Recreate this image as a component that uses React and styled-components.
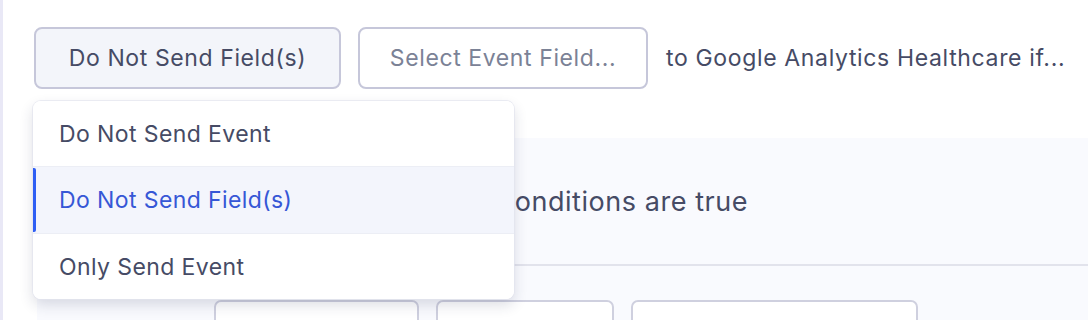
import React from "react";
import styled, { createGlobalStyle } from "styled-components";

const Global = createGlobalStyle`
  html, body { margin: 0; padding: 0; background: #ffffff; }
  body { font-family: Inter, "Noto Sans", sans-serif; -webkit-font-smoothing: antialiased; }
  * { box-sizing: border-box; }
`;

const Page = styled.div`
  height: 320px;
  overflow: hidden;
  border-left: 3px solid #e9e8f6;
  padding: 27px 0 0 31px;
`;

const TopRow = styled.div`
  position: relative;
  display: flex;
  align-items: center;
  gap: 17px;
`;

const ActionButton = styled.div`
  height: 62px;
  display: flex;
  align-items: center;
  justify-content: center;
  padding: 0 20px;
  width: ${(p) => p.$w}px;
  border: 2px solid #c6c7da;
  border-radius: 8px;
  background: ${(p) => (p.$filled ? "#f3f5fa" : "#ffffff")};
  color: ${(p) => (p.$placeholder ? "#7b8296" : "#464b65")};
  font-size: 23px;
  letter-spacing: 0.6px;
  white-space: nowrap;
`;

const Sentence = styled.span`
  margin-left: 1px;
  color: #464b65;
  font-size: 23px;
  letter-spacing: 0.65px;
  white-space: nowrap;
`;

const Menu = styled.div`
  position: absolute;
  top: 74px;
  left: -1px;
  width: 481px;
  background: #ffffff;
  border-radius: 8px;
  overflow: hidden;
  z-index: 5;
  box-shadow: 0 0 0 1px rgba(226, 228, 238, 0.7), 0 6px 14px rgba(40, 42, 80, 0.16);
`;

const MenuItem = styled.div`
  position: relative;
  height: ${(p) => p.$h}px;
  display: flex;
  align-items: center;
  padding-left: 26px;
  font-size: 23px;
  letter-spacing: 0.4px;
  color: ${(p) => (p.$active ? "#3657d6" : "#464b65")};
  background: ${(p) => (p.$active ? "#f3f5fc" : "#ffffff")};
  border-top: ${(p) => (p.$first ? "none" : "1px solid #eceef5")};
  &::before {
    content: "";
    display: ${(p) => (p.$active ? "block" : "none")};
    position: absolute;
    left: 0;
    top: 1px;
    bottom: 1px;
    width: 3px;
    border-radius: 0 2px 2px 0;
    background: #2e5ef4;
  }
`;

const Panel = styled.div`
  margin-top: 49px;
  margin-left: 3px;
  background: #f9fafe;
  height: 200px;
`;

const PanelHeader = styled.div`
  height: 128px;
  display: flex;
  align-items: center;
  padding-left: 183px;
  border-bottom: 2px solid #e2e3ec;
  font-size: 27px;
  letter-spacing: 0.55px;
  color: #464b65;
  white-space: nowrap;
`;

const ConditionRow = styled.div`
  display: flex;
  gap: 17px;
  padding: 34px 0 0 177px;
`;

const Field = styled.div`
  width: ${(p) => p.$w}px;
  height: 50px;
  background: #ffffff;
  border: 2px solid #cfd0df;
  border-radius: 7px;
`;

export default function App() {
  return (
    <>
      <Global />
      <Page>
        <TopRow>
          <ActionButton $filled $w={307}>Do Not Send Field(s)</ActionButton>
          <ActionButton $placeholder $w={290}>Select Event Field...</ActionButton>
          <Sentence>to Google Analytics Healthcare if...</Sentence>
          <Menu>
            <MenuItem $first $h={65}>Do Not Send Event</MenuItem>
            <MenuItem $active $h={67}>Do Not Send Field(s)</MenuItem>
            <MenuItem $h={66}>Only Send Event</MenuItem>
          </Menu>
        </TopRow>
        <Panel>
          <PanelHeader>If all of the following conditions are true</PanelHeader>
          <ConditionRow>
            <Field $w={205} />
            <Field $w={178} />
            <Field $w={287} />
          </ConditionRow>
        </Panel>
      </Page>
    </>
  );
}
